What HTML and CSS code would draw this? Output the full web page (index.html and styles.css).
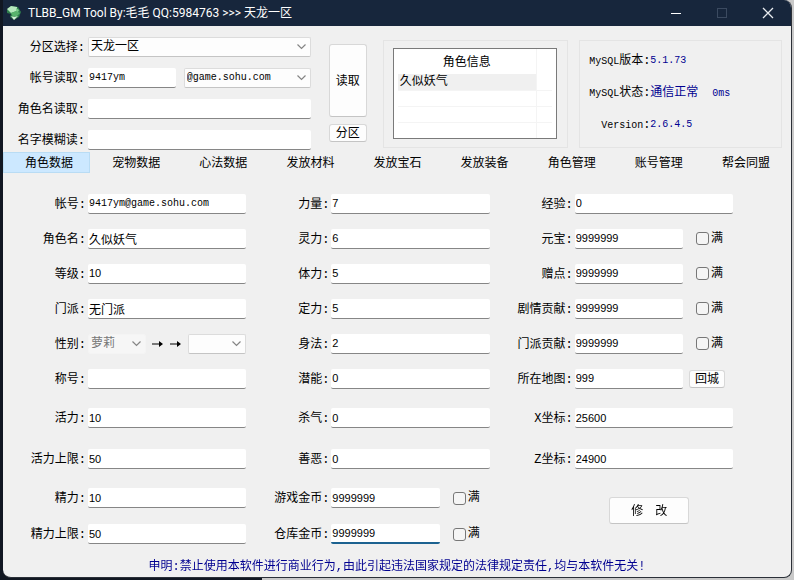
FILE: index.html
```html
<!DOCTYPE html>
<html lang="zh-CN">

<head>
    <meta charset="UTF-8">
    <meta name="viewport" content="width=device-width, initial-scale=1.0">
    <title>TLBB_GM Tool</title>
    <link rel="stylesheet" href="styles.css">
</head>

<body>
    <div class="window">
        <header class="title-bar">
            <svg class="logo" viewBox="0 0 16 16" width="16" height="16">
                <path d="M1 5L5 1L12 2L15 7L13 12L8 15L4 12L5 9L1 8Z" fill="#2f7d4c"/>
                <path d="M1 4L5 1L11 2L11 6L5 8Z" fill="#b6e8bd"/>
                <path d="M5 8L10 6L14 8L11 11L7 12Z" fill="#58b36c"/>
                <path d="M5 11L8 12L12 11L8 15Z" fill="#d5efd8"/>
                <path d="M10 3L13 5L12 7L10 6Z" fill="#7fcf8e"/>
            </svg>
            <h1>TLBB_GM Tool By:毛毛 QQ:5984763 &gt;&gt;&gt; 天龙一区</h1>
            <button class="win-btn" type="button" aria-label="最小化">
                <svg viewBox="0 0 12 12" width="12" height="12"><path d="M1 6.5H11" stroke="#fff"/></svg>
            </button>
            <button class="win-btn" type="button" aria-label="最大化" disabled>
                <svg viewBox="0 0 12 12" width="12" height="12"><rect x="1.5" y="1.5" width="9" height="9" fill="none" stroke="#3b4a60"/></svg>
            </button>
            <button class="win-btn" type="button" aria-label="关闭">
                <svg viewBox="0 0 12 12" width="12" height="12"><path d="M1 1L11 11M11 1L1 11" stroke="#e8ebef" stroke-width="1.3"/></svg>
            </button>
        </header>

        <section class="top">
            <div class="search">
                <div class="field">
                    <label for="area">分区选择:</label>
                    <select id="area"><option>天龙一区</option></select>
                </div>
                <div class="field">
                    <label for="account">帐号读取:</label>
                    <div class="pair">
                        <input class="en" id="account" type="text" value="9417ym">
                        <select class="en" aria-label="邮箱后缀"><option>@game.sohu.com</option></select>
                    </div>
                </div>
                <div class="field">
                    <label for="roleName">角色名读取:</label>
                    <input id="roleName" type="text">
                </div>
                <div class="field">
                    <label for="fuzzy">名字模糊读:</label>
                    <input id="fuzzy" type="text">
                </div>
            </div>
            <div class="actions">
                <button class="btn read" type="button">读取</button>
                <button class="btn" type="button">分区</button>
            </div>
            <div class="group role-box">
                <div class="role-list">
                    <table>
                        <thead>
                            <tr><th>角色信息</th><th></th></tr>
                        </thead>
                        <tbody>
                            <tr class="active"><td>久似妖气</td><td></td></tr>
                            <tr><td></td><td></td></tr>
                            <tr><td></td><td></td></tr>
                            <tr><td></td><td></td></tr>
                        </tbody>
                    </table>
                </div>
            </div>
            <dl class="group info">
                <dt><span class="en">MySQL</span>版本:</dt>
                <dd class="en">5.1.73</dd>
                <dt><span class="en">MySQL</span>状态:</dt>
                <dd>通信正常<span class="en ping">0ms</span></dd>
                <dt><span class="en">Version</span>:</dt>
                <dd class="en">2.6.4.5</dd>
            </dl>
        </section>

        <nav class="tabs">
            <button class="active" type="button">角色数据</button>
            <button type="button">宠物数据</button>
            <button type="button">心法数据</button>
            <button type="button">发放材料</button>
            <button type="button">发放宝石</button>
            <button type="button">发放装备</button>
            <button type="button">角色管理</button>
            <button type="button">账号管理</button>
            <button type="button">帮会同盟</button>
        </nav>

        <form class="data">
            <div class="col">
                <div class="field"><label for="acc">帐号:</label><input class="en" id="acc" type="text" value="9417ym@game.sohu.com"></div>
                <div class="field"><label for="name">角色名:</label><input id="name" type="text" value="久似妖气"></div>
                <div class="field"><label for="level">等级:</label><input class="num" id="level" type="text" value="10"></div>
                <div class="field"><label for="menpai">门派:</label><input id="menpai" type="text" value="无门派"></div>
                <div class="field">
                    <label for="sex">性别:</label>
                    <div class="sex">
                        <select id="sex" disabled><option>萝莉</option></select>
                        <svg viewBox="0 0 32 8" width="32" height="8">
                            <path d="M1 4H9M19 4H27" stroke="#000"/>
                            <path d="M8 1L12 4L8 7ZM26 1L30 4L26 7Z"/>
                        </svg>
                        <select aria-label="新性别"><option></option></select>
                    </div>
                </div>
                <div class="field"><label for="nick">称号:</label><input id="nick" type="text"></div>
                <div class="field"><label for="huoli">活力:</label><input class="num" id="huoli" type="text" value="10"></div>
                <div class="field"><label for="huoliMax">活力上限:</label><input class="num" id="huoliMax" type="text" value="50"></div>
                <div class="field"><label for="jingli">精力:</label><input class="num" id="jingli" type="text" value="10"></div>
                <div class="field"><label for="jingliMax">精力上限:</label><input class="num" id="jingliMax" type="text" value="50"></div>
            </div>

            <div class="col">
                <div class="field"><label for="str">力量:</label><input class="num" id="str" type="text" value="7"></div>
                <div class="field"><label for="spr">灵力:</label><input class="num" id="spr" type="text" value="6"></div>
                <div class="field"><label for="con">体力:</label><input class="num" id="con" type="text" value="5"></div>
                <div class="field"><label for="ipr">定力:</label><input class="num" id="ipr" type="text" value="5"></div>
                <div class="field"><label for="dex">身法:</label><input class="num" id="dex" type="text" value="2"></div>
                <div class="field"><label for="points">潜能:</label><input class="num" id="points" type="text" value="0"></div>
                <div class="field"><label for="pk">杀气:</label><input class="num" id="pk" type="text" value="0"></div>
                <div class="field"><label for="shane">善恶:</label><input class="num" id="shane" type="text" value="0"></div>
                <div class="field">
                    <label for="gold">游戏金币:</label>
                    <div class="short">
                        <input class="num" id="gold" type="text" value="9999999">
                        <label class="full"><input type="checkbox">满</label>
                    </div>
                </div>
                <div class="field">
                    <label for="bank">仓库金币:</label>
                    <div class="short">
                        <input class="num" id="bank" type="text" value="9999999">
                        <label class="full"><input type="checkbox">满</label>
                    </div>
                </div>
            </div>

            <div class="col">
                <div class="field"><label for="exp">经验:</label><input class="num" id="exp" type="text" value="0"></div>
                <div class="field">
                    <label for="yuanbao">元宝:</label>
                    <div class="short">
                        <input class="num" id="yuanbao" type="text" value="9999999">
                        <label class="full"><input type="checkbox">满</label>
                    </div>
                </div>
                <div class="field">
                    <label for="zengdian">赠点:</label>
                    <div class="short">
                        <input class="num" id="zengdian" type="text" value="9999999">
                        <label class="full"><input type="checkbox">满</label>
                    </div>
                </div>
                <div class="field">
                    <label for="juqing">剧情贡献:</label>
                    <div class="short">
                        <input class="num" id="juqing" type="text" value="9999999">
                        <label class="full"><input type="checkbox">满</label>
                    </div>
                </div>
                <div class="field">
                    <label for="gongxian">门派贡献:</label>
                    <div class="short">
                        <input class="num" id="gongxian" type="text" value="9999999">
                        <label class="full"><input type="checkbox">满</label>
                    </div>
                </div>
                <div class="field">
                    <label for="map">所在地图:</label>
                    <div class="short">
                        <input class="num" id="map" type="text" value="999">
                        <button class="btn back" type="button">回城</button>
                    </div>
                </div>
                <div class="field"><label for="posX">X坐标:</label><input class="num" id="posX" type="text" value="25600"></div>
                <div class="field"><label for="posZ">Z坐标:</label><input class="num" id="posZ" type="text" value="24900"></div>
                <div class="submit"><button class="btn" type="button">修&emsp;改</button></div>
            </div>
        </form>

        <footer>申明:禁止使用本软件进行商业行为,由此引起违法国家规定的法律规定责任,均与本软件无关!</footer>
    </div>

    <script>
        // 光标放到仓库金币末尾
        var bank = document.querySelector('#bank');
        bank.focus();
        bank.setSelectionRange(bank.value.length, bank.value.length);
    </script>
</body>

</html>
```
FILE: styles.css
```css
* {
    margin: 0;
    padding: 0;
    box-sizing: border-box;
}

body {
    min-height: 100vh;
    display: flex;
    padding: 0 2px 2px 3px;
    background: linear-gradient(to right, #111722 33%, #c9c9c9 33%);
    font: 12px/16px "Liberation Mono", "Noto Sans CJK SC", monospace;
    color: #000;
}

input, select, button {
    font: inherit;
    color: inherit;
}

.window {
    flex: 1;
    display: flex;
    flex-direction: column;
    background: #f0f0f0;
    border-right: 1px solid #2b3038;
    border-bottom: 1px solid #2b3038;
    border-radius: 0 8px 8px 8px;
    overflow: hidden;
}

/* 标题栏 */
.title-bar {
    display: flex;
    align-items: center;
    height: 26px;
    padding-left: 3px;
    background: #17263c;
    color: #fff;
}
.title-bar h1 {
    flex: 1;
    margin-left: 6px;
    font: 12px/16px Roboto, "Noto Sans CJK SC", sans-serif;
}
.win-btn {
    width: 46px;
    height: 26px;
    border: 0;
    background: none;
}
.win-btn svg {
    display: block;
    margin: 0 auto;
}

/* 输入框 */
input[type="text"],
select {
    width: 100%;
    min-width: 0;
    height: 20px;
    padding: 1px 1px 0;
    border: 0;
    border-bottom: 1px solid #868686;
    border-radius: 2px;
    background-color: #fff;
    outline: none;
}
input[type="text"]:focus {
    border-bottom: 2px solid #1c6290;
}
select {
    appearance: none;
    padding: 1px 16px 0 2px;
    border: 1px solid #dcdcdc;
    border-bottom-color: #c4c4c4;
    background: #fdfdfd url("data:image/svg+xml,%3Csvg xmlns='http://www.w3.org/2000/svg' width='9' height='6'%3E%3Cpath d='M.5 .5L4.5 4.5L8.5 .5' fill='none' stroke='%23858585' stroke-width='1.2'/%3E%3C/svg%3E") no-repeat right 4px center;
}
select:disabled {
    border-color: #f4f4f4;
    background-color: #f6f6f6;
    color: #777;
    opacity: 1;
}
input.num {
    padding-top: 0;
    font: 11px/16px "Liberation Sans", sans-serif;
}
.en,
input.en,
select.en {
    font-size: 10px;
}
.btn {
    border: 1px solid #d8d8d8;
    border-bottom-color: #c4c4c4;
    border-radius: 3px;
    background: #fdfdfd;
}

.field {
    display: grid;
    grid-template-columns: 85px 1fr;
    align-items: center;
}
.field > label {
    padding: 2px 2px 0 0;
    text-align: right;
    white-space: nowrap;
}

/* 顶部 */
.top {
    display: flex;
    padding: 5px 9px 0 0;
}
.search {
    flex: 1 1 307px;
    display: grid;
    grid-auto-rows: 31px;
}
.search .field > label {
    padding-right: 3px;
}
.pair {
    display: grid;
    grid-template-columns: 88fr 127fr;
    gap: 8px;
}
.actions {
    width: 38px;
    margin: 13px 16px 0 18px;
    display: flex;
    flex-direction: column;
    gap: 7px;
}
.actions .btn {
    height: 18px;
    padding-top: 2px;
    line-height: 14px;
}
.actions .read {
    height: 73px;
}
.group {
    height: 108px;
    margin-top: 9px;
    border: 1px solid #e4e4e4;
}
.role-box {
    flex: 1 1 185px;
    padding: 7px 10px 0 9px;
}
.role-list {
    height: 91px;
    border: 1px solid #7a7a7a;
    background: #fff;
    padding: 0 4px;
    overflow: hidden;
}
.role-list table {
    width: 100%;
    border-collapse: collapse;
    table-layout: fixed;
}
.role-list th {
    height: 25px;
    padding-top: 2px;
    font-weight: normal;
}
.role-list th:last-child {
    width: 16px;
}
.role-list td {
    height: 16px;
    padding: 1px 0 0 2px;
    line-height: 15px;
    border-bottom: 1px solid #f4f4f4;
}
.role-list th:first-child,
.role-list td:first-child {
    border-right: 1px solid #f4f4f4;
}
.role-list .active td:first-child {
    background: #f0f0f0;
}
.info {
    flex: 1 1 202px;
    margin-left: 11px;
    padding: 4px 0;
    display: grid;
    grid-template-columns: 70px 1fr;
    grid-auto-rows: 32px;
    align-items: center;
}
.info dt {
    text-align: right;
    white-space: nowrap;
}
.info dd {
    color: #000090;
}
.ping {
    margin-left: 14px;
}

/* 选项卡 */
.tabs {
    display: grid;
    grid-template-columns: repeat(9, 1fr);
    padding: 0 4px 0 0;
    margin-top: -3px;
}
.tabs button {
    height: 21px;
    padding: 3px 0 0 5px;
    border: 1px solid transparent;
    background: none;
}
.tabs .active {
    border-color: #b9dcf4;
    background: #cce8ff;
}

/* 角色数据 */
.data {
    display: grid;
    grid-template-columns: repeat(3, 1fr);
    padding: 13px 58px 0 0;
}
.col {
    display: grid;
    grid-template-rows: repeat(6, 35px) 44px 38px 40px 32px;
}
.short,
.sex {
    display: flex;
    align-items: center;
}
.short {
    padding-right: 8px;
}
.short > input {
    flex: 1;
}
.full {
    display: flex;
    align-items: center;
    gap: 2px;
    margin: 0 2px 0 13px;
}
.full input {
    appearance: none;
    width: 13px;
    height: 13px;
    border: 1px solid #777;
    border-radius: 3px;
    background: #f5f5f5;
}
.full input:checked {
    background: #1c6290;
}
.back {
    width: 36px;
    height: 18px;
    padding-top: 2px;
    margin-left: 6px;
    line-height: 14px;
}
.sex {
    gap: 5px;
}
.sex select {
    flex: 1;
}
.submit {
    grid-row: 9 / 11;
    justify-self: center;
    padding: 19px 0 0 76px;
}
.submit .btn {
    width: 80px;
    height: 27px;
    padding-top: 2px;
}

footer {
    padding: 9px 0 2px;
    text-align: center;
    color: #000090;
}
```
